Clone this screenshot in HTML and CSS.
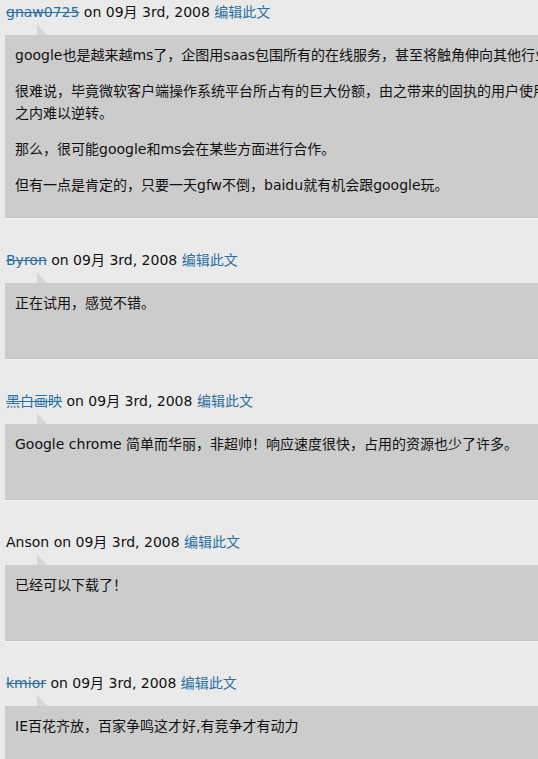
FILE: index.html
```html
<!doctype html>
<html lang="zh-CN">
<head>
    <meta charset="UTF-8">
    <title>Comments</title>
    <link rel="stylesheet" href="styles.css">
</head>
<body>

<ol class="commentlist">
    <li class="comment">
        <div class="comment-meta">
            <a class="author" href="#">gnaw0725</a> on 09月 3rd, 2008 <a class="edit" href="#">编辑此文</a>
        </div>
        <div class="comment-body">
            <p>google也是越来越ms了，企图用saas包围所有的在线服务，甚至将触角伸向其他行业。</p>
            <p>很难说，毕竟微软客户端操作系统平台所占有的巨大份额，由之带来的固执的用户使用习惯，在短时间之内难以逆转。</p>
            <p>那么，很可能google和ms会在某些方面进行合作。</p>
            <p>但有一点是肯定的，只要一天gfw不倒，baidu就有机会跟google玩。</p>
        </div>
    </li>
    <li class="comment">
        <div class="comment-meta">
            <a class="author" href="#">Byron</a> on 09月 3rd, 2008 <a class="edit" href="#">编辑此文</a>
        </div>
        <div class="comment-body">
            <p>正在试用，感觉不错。</p>
        </div>
    </li>
    <li class="comment">
        <div class="comment-meta">
            <a class="author" href="#">黑白画映</a> on 09月 3rd, 2008 <a class="edit" href="#">编辑此文</a>
        </div>
        <div class="comment-body">
            <p>Google chrome 简单而华丽，非超帅！响应速度很快，占用的资源也少了许多。</p>
        </div>
    </li>
    <li class="comment">
        <div class="comment-meta">
            Anson on 09月 3rd, 2008 <a class="edit" href="#">编辑此文</a>
        </div>
        <div class="comment-body">
            <p>已经可以下载了！</p>
        </div>
    </li>
    <li class="comment">
        <div class="comment-meta">
            <a class="author" href="#">kmior</a> on 09月 3rd, 2008 <a class="edit" href="#">编辑此文</a>
        </div>
        <div class="comment-body">
            <p>IE百花齐放，百家争鸣这才好,有竞争才有动力</p>
        </div>
    </li>
</ol>

</body>
</html>
```

FILE: styles.css
```css
html, body {
    overflow: hidden;
}
body {
    margin: 0;
    padding-top: 2px;
    background: #eaeaea;
    color: #111;
    font-family: "DejaVu Sans", Verdana, "Noto Sans CJK SC", sans-serif;
    font-size: 14px;
}
a {
    color: #2a6fa3;
    text-decoration: none;
}

.commentlist {
    list-style: none;
    margin: 0;
    padding: 0 0 0 5px;
}
.comment {
    margin-bottom: 32px;
}
.comment-meta {
    line-height: 20px;
    padding-left: 1px;
    margin-bottom: 13px;
}
.comment-meta .author {
    text-decoration: line-through;
}

.comment-body {
    position: relative;
    box-sizing: border-box;
    width: 660px;
    min-height: 76px;
    padding: 9px 10px 7px;
    background: #cccccc;
    border-bottom: 1px solid #c3c3c3;
    box-shadow: 0 1px 0 #f4f4f4;
}
.comment-body::before {
    content: "";
    position: absolute;
    top: -11px;
    left: 32px;
    width: 0;
    height: 0;
    border-bottom: 11px solid #d6d6d6;
    border-right: 10px solid transparent;
}
.comment-body p {
    margin: 0 0 14px;
    line-height: 22px;
}
```
